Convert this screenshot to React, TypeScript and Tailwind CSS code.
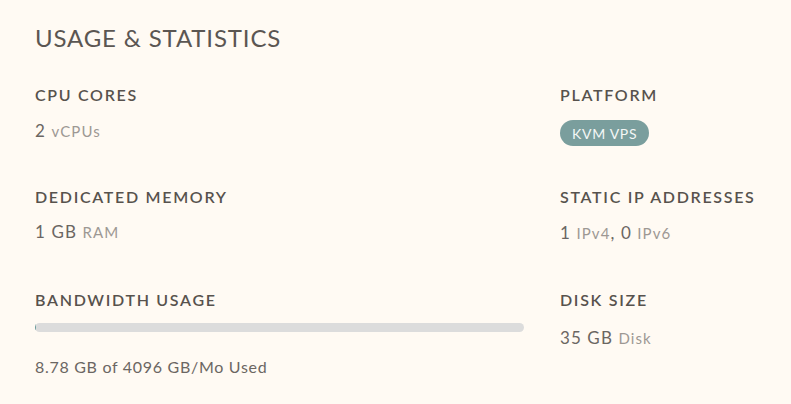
const Label = ({ children }: { children: React.ReactNode }) => (
  <h3 className="text-[16px] leading-[20px] font-semibold text-[#57524d] tracking-[1.7px]">{children}</h3>
)

const Value = ({ num, unit, top = "mt-[15px]" }: { num: string; unit: string; top?: string }) => (
  <p className={`${top} text-[17px] leading-[20px] text-[#6b6662] tracking-[1.1px]`}>
    {num} <span className="text-[15px] text-[#9d9893]">{unit}</span>
  </p>
)

export default function App() {
  return (
    <main
      className="w-[791px] h-[404px] bg-[#fffaf3] pl-[35px] pt-[23px]"
      style={{ fontFamily: "Lato, 'Open Sans', sans-serif" }}
    >
      <h2 className="text-[24px] leading-[30px] text-[#5b5652] tracking-[0.85px]">USAGE &amp; STATISTICS</h2>
      <section className="mt-[32px] grid grid-cols-[525px_1fr] grid-rows-[102px_103px_auto]">
        <div>
          <Label>CPU CORES</Label>
          <Value num="2" unit="vCPUs" top="mt-[16px]" />
        </div>
        <div>
          <Label>PLATFORM</Label>
          <span className="mt-[15px] inline-flex items-center h-[26px] px-[12px] rounded-full bg-[#7a9e9d] text-[14px] text-[#f4f7f6] tracking-[0.7px]">
            KVM VPS
          </span>
        </div>
        <div>
          <Label>DEDICATED MEMORY</Label>
          <Value num="1 GB" unit="RAM" />
        </div>
        <div>
          <Label>STATIC IP ADDRESSES</Label>
          <p className="mt-[16px] text-[17px] leading-[20px] text-[#6b6662] tracking-[1.1px]">
            1 <span className="text-[15px] text-[#9d9893]">IPv4</span>, 0{" "}
            <span className="text-[15px] text-[#9d9893]">IPv6</span>
          </p>
        </div>
        <div>
          <Label>BANDWIDTH USAGE</Label>
          <div className="mt-[13px] w-[489px] h-[9px] rounded-full bg-[#dcdcdc] overflow-hidden">
            <div className="h-full bg-[#6b9c9c]" style={{ width: `${(8.78 / 4096) * 100}%` }} />
          </div>
          <p className="mt-[25px] text-[16px] leading-[20px] text-[#6b6662] tracking-[0.7px]">8.78 GB of 4096 GB/Mo Used</p>
        </div>
        <div>
          <Label>DISK SIZE</Label>
          <Value num="35 GB" unit="Disk" top="mt-[18px]" />
        </div>
      </section>
    </main>
  )
}
